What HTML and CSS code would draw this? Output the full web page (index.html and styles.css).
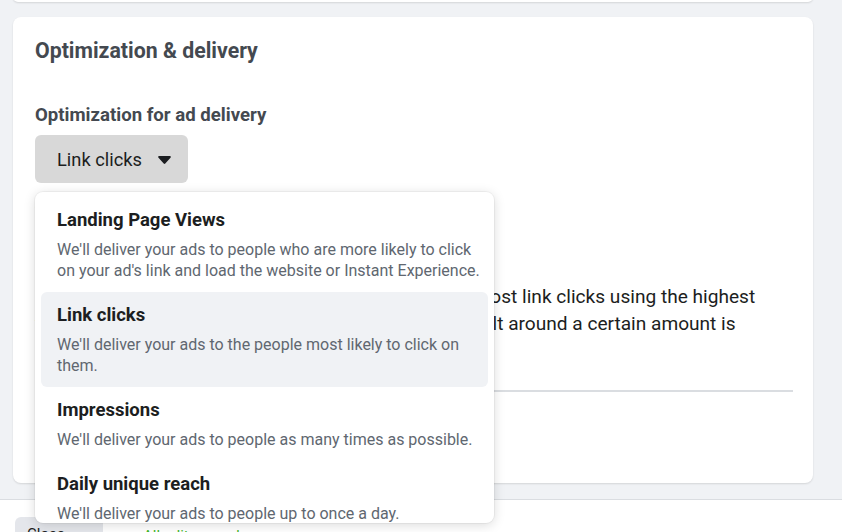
FILE: index.html
```html
<!DOCTYPE html>
<html>
<head>
<meta charset="utf-8">
<link rel="stylesheet" href="styles.css">
</head>
<body>
<div class="page">
  <main class="main">
    <div class="card card-prev"></div>
    <section class="card card-opt">
      <h2 class="card-title">Optimization &amp; delivery</h2>
      <div class="field-label">Optimization for ad delivery</div>
      <div class="select-wrap">
        <button class="select-btn">
          <span>Link clicks</span>
          <svg class="caret" width="13" height="10" viewBox="0 0 13 10"><path d="M1.2 1h10.6c.9 0 1.3 1 .7 1.7L7.3 8.6c-.4.5-1.2.5-1.6 0L.5 2.7C-.1 2 .3 1 1.2 1z" fill="#1c1e21"/></svg>
        </button>
        <div class="dropdown">
          <div class="option">
            <div class="option-title">Landing Page Views</div>
            <div class="option-desc">We'll deliver your ads to people who are more likely to click on your ad's link and load the website or Instant Experience.</div>
          </div>
          <div class="option selected">
            <div class="option-title">Link clicks</div>
            <div class="option-desc">We'll deliver your ads to the people most likely to click on them.</div>
          </div>
          <div class="option">
            <div class="option-title">Impressions</div>
            <div class="option-desc">We'll deliver your ads to people as many times as possible.</div>
          </div>
          <div class="option">
            <div class="option-title">Daily unique reach</div>
            <div class="option-desc">We'll deliver your ads to people up to once a day.</div>
          </div>
        </div>
      </div>
      <div class="goal">
        <div class="goal-label">Cost per result goal</div>
        <div class="goal-input">$X.XX</div>
      </div>
      <p class="goal-text">We'll aim to spend your entire budget and to get the most link clicks using the highest volume bid strategy. If keeping the mean cost per result around a certain amount is important, enter a cost per result goal.</p>
      <hr class="divider">
      <div class="more">Show more options</div>
    </section>
  </main>
  <footer class="footer">
    <div class="footer-btn">Close</div>
    <div class="footer-text">All edits saved</div>
  </footer>
</div>
</body>
</html>
```

FILE: styles.css
```css
* { box-sizing: border-box; }
html, body { margin: 0; padding: 0; }
body {
  background: #f0f2f5;
  font-family: Roboto, "Liberation Sans", Arial, sans-serif;
  color: #1c1e21;
  width: 842px;
  height: 532px;
  overflow: hidden;
}
.page { display: flex; flex-direction: column; }
.main {
  width: 800px;
  margin-left: 13px;
  display: flex;
  flex-direction: column;
  gap: 15px;
}
.card {
  background: #fff;
  border-radius: 8px;
  box-shadow: 0 1px 2px rgba(0,0,0,0.12);
}
.card-prev {
  height: 10px;
  margin-top: -8px;
}
.card-opt {
  height: 466px;
  padding: 21px 20px 0 22px;
  display: flex;
  flex-direction: column;
}
.card-title {
  margin: 0;
  font-size: 21.3px;
  line-height: 25px;
  font-weight: 700;
  color: #444950;
}
.field-label {
  margin-top: 41px;
  font-size: 18.6px;
  line-height: 22px;
  font-weight: 700;
  color: #444950;
}
.select-wrap {
  position: relative;
  margin-top: 9px;
  align-self: flex-start;
}
.select-btn {
  display: flex;
  align-items: center;
  gap: 16px;
  width: 153px;
  height: 48px;
  padding: 0 0 0 22px;
  border: 0;
  border-radius: 6px;
  background: #d8d8d8;
  font-family: inherit;
  font-size: 18.3px;
  color: #1c1e21;
}
.caret { margin-top: 2px; }
.dropdown {
  position: absolute;
  left: 0;
  top: 57px;
  width: 459px;
  height: 331px;
  overflow: hidden;
  background: #fff;
  border-radius: 8px;
  box-shadow: 0 2px 12px rgba(0,0,0,0.15), 0 0 0 1px rgba(0,0,0,0.04);
  padding: 5px 6px 0;
  z-index: 5;
}
.option {
  padding: 12px 6px 11px 16px;
  border-radius: 6px;
}
.option.selected { background: #f0f2f5; }
.option-title {
  font-size: 18.5px;
  line-height: 22px;
  font-weight: 700;
  color: #1c1e21;
}
.option-desc {
  margin-top: 8px;
  font-size: 16px;
  line-height: 21px;
  color: #606770;
}
.goal {
  margin-top: 16px;
  height: 84px;
}
.goal-label { font-size: 15px; font-weight: 700; color: #444950; }
.goal-input {
  margin-top: 8px;
  width: 200px;
  height: 40px;
  border: 1px solid #ccd0d5;
  border-radius: 6px;
}
.goal-text {
  margin: 0;
  font-size: 19.1px;
  line-height: 27px;
  color: #1c1e21;
}
.divider {
  margin: 26px 0 0;
  border: 0;
  border-top: 2px solid #dadde1;
}
.more {
  margin-top: 20px;
  font-size: 15px;
  color: #606770;
}
.footer {
  margin-top: 16px;
  height: 40px;
  background: #fff;
  border-top: 1px solid #dadde1;
  display: flex;
  align-items: flex-start;
  gap: 40px;
  padding: 17px 0 0 15px;
}
.footer-btn {
  width: 88px;
  height: 36px;
  background: #e4e6eb;
  border-radius: 6px;
  font-size: 15px;
  padding: 8px 12px;
}
.footer-text {
  margin-top: 10px;
  font-size: 15px;
  color: #42b72a;
}
```
